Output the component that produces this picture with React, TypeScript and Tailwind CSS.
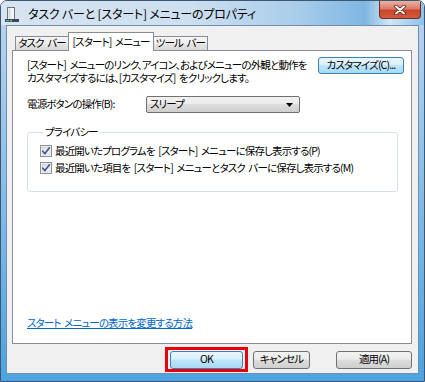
import React from "react";

function WinButton({
  label,
  focused,
  className,
}: {
  label: string;
  focused?: boolean;
  className: string;
}) {
  return (
    <div
      className={
        "flex items-center justify-center rounded-[3px] border leading-none text-black " +
        (focused
          ? "border-[#3c7fb1] bg-[linear-gradient(180deg,#eaf6fd_0%,#d9f0fc_45%,#bee6fd_50%,#a7d9f5_100%)] "
          : "border-[#707070] bg-[linear-gradient(180deg,#f2f2f2_0%,#ebebeb_45%,#dddddd_50%,#cfcfcf_100%)] ") +
        className
      }
    >
      {label}
    </div>
  );
}

function CheckBox() {
  return (
    <svg width="12" height="12" viewBox="0 0 12 12" className="shrink-0">
      <defs>
        <linearGradient id="cbg" x1="0" y1="0" x2="1" y2="1">
          <stop offset="0" stopColor="#dcdcdc" />
          <stop offset="1" stopColor="#fbfbfb" />
        </linearGradient>
      </defs>
      <rect x="0.5" y="0.5" width="11" height="11" fill="#fff" stroke="#8e8f8f" />
      <rect x="2" y="2" width="8" height="8" fill="url(#cbg)" stroke="#c4c4c4" strokeWidth="0.6" />
      <path d="M2.8 6.2 L5 8.6 L9.4 2.8" fill="none" stroke="#3d5a98" strokeWidth="1.7" strokeLinecap="round" strokeLinejoin="round" />
    </svg>
  );
}

function TitleIcon() {
  return (
    <svg width="14" height="17" viewBox="0 0 14 17" className="shrink-0">
      <rect x="2.5" y="1.5" width="7" height="12" fill="#f4f4f4" stroke="#6c7480" />
      <rect x="3.5" y="2.5" width="2" height="10" fill="#d5d9de" />
      <rect x="0" y="13" width="14" height="3" fill="#3b4656" />
      <rect x="1" y="14" width="3" height="1.5" fill="#4aa3e0" />
      <rect x="5" y="14" width="2" height="1.5" fill="#7bc043" />
    </svg>
  );
}

export default function App() {
  return (
    <div className="h-[382px] w-[425px] overflow-hidden bg-white font-['Noto_Sans_CJK_JP',sans-serif] text-[10.5px] tracking-[-0.85px] text-black [font-feature-settings:'palt'] [word-spacing:2px]">
      <div className="flex h-full w-full flex-col overflow-hidden rounded-t-[7px] border border-[#3d5672]">
        {/* Title bar */}
        <div className="flex h-[24px] shrink-0 items-start bg-[linear-gradient(90deg,#d7e4f1_0%,#cddff0_45%,#a9cdea_70%,#7fb6e1_86%,#d3e6f5_92%,#8cc2e9_100%)] pl-[4px]">
          <div className="mt-[5px]">
            <TitleIcon />
          </div>
          <span className="ml-[9px] mt-[5px] text-[12px] leading-[16px] tracking-[-0.2px] text-black [word-spacing:0px]">
            タスク バーと [スタート] メニューのプロパティ
          </span>
          <div className="mr-[3px] ml-auto flex h-[18px] w-[42px] items-center justify-center rounded-b-[4px] border border-t-0 border-[#6a2f25] bg-[linear-gradient(180deg,#eab3a3_0%,#db7c66_45%,#c9452c_55%,#d35a3c_100%)]">
            <svg width="12" height="10" viewBox="0 0 12 10">
              <path d="M2 1.5 L10 8.5 M10 1.5 L2 8.5" stroke="#4a1e18" strokeWidth="3.6" strokeLinecap="round" />
              <path d="M2 1.5 L10 8.5 M10 1.5 L2 8.5" stroke="#ffffff" strokeWidth="2" strokeLinecap="round" />
            </svg>
          </div>
        </div>

        {/* Frame body */}
        <div className="flex flex-1 flex-col bg-[linear-gradient(180deg,#b6d2ec_0%,#8ec0e8_40%,#4ba3df_100%)] px-[5px] pb-[7px]">
          <div className="flex flex-1 flex-col border border-[#6f8fb0] bg-[#f0f0f0]">
            {/* Tabs */}
            <div className="flex items-end pl-[8px] pt-[6px]">
              <div className="flex h-[14px] w-[53px] items-center justify-center border border-r-0 border-b-0 border-[#898c95] bg-[linear-gradient(180deg,#f5f5f5_0%,#eeeeee_50%,#e4e4e4_51%,#dadada_100%)] leading-none">
                タスク バー
              </div>
              <div className="relative z-10 -mb-px flex h-[19px] w-[86px] items-start justify-center border border-b-0 border-[#898c95] bg-white pt-[4px] leading-none">
                [スタート] メニュー
              </div>
              <div className="flex h-[14px] w-[54px] items-center justify-center border border-l-0 border-b-0 border-[#898c95] bg-[linear-gradient(180deg,#f5f5f5_0%,#eeeeee_50%,#e4e4e4_51%,#dadada_100%)] leading-none">
                ツール バー
              </div>
            </div>

            {/* Panel */}
            <div className="ml-[5px] mr-[6px] flex flex-1 flex-col border border-[#898c95] bg-white pb-[13px]">
              <div className="flex items-start justify-between pl-[14px] pr-[7px] pt-[6px]">
                <p className="mt-[1px] leading-[13px]">
                  [スタート] メニューのリンク、アイコン、およびメニューの外観と動作を
                  <br />
                  カスタマイズするには、[カスタマイズ] をクリックします。
                </p>
                <WinButton label="カスタマイズ(C)..." focused className="h-[17px] w-[86px] shrink-0" />
              </div>

              <div className="mt-[12px] flex items-center pl-[14px]">
                <span className="w-[119px] leading-none">電源ボタンの操作(B):</span>
                <div className="flex h-[17px] w-[154px] items-center justify-between rounded-[2px] border border-[#707070] bg-[linear-gradient(180deg,#f2f2f2_0%,#ebebeb_45%,#dddddd_50%,#cfcfcf_100%)] pl-[3px] pr-[6px]">
                  <span className="leading-none">スリープ</span>
                  <svg width="7" height="4" viewBox="0 0 7 4">
                    <path d="M0 0 H7 L3.5 4 Z" fill="#000" />
                  </svg>
                </div>
              </div>

              <fieldset className="ml-[14px] mt-[13px] w-[371px] rounded-[3px] border border-[#d5dfe5] pb-[16px] pl-[12px]">
                <legend className="ml-[3px] px-[2px] leading-[12px]">プライバシー</legend>
                <div className="mt-[6px] flex items-center gap-[3px]">
                  <CheckBox />
                  <span className="leading-[14px]">
                    最近開いたプログラムを [スタート] メニューに保存し表示する(P)
                  </span>
                </div>
                <div className="mt-[3px] flex items-center gap-[3px]">
                  <CheckBox />
                  <span className="leading-[14px]">
                    最近開いた項目を [スタート] メニューとタスク バーに保存し表示する(M)
                  </span>
                </div>
              </fieldset>

              <a className="mt-auto ml-[14px] self-start leading-[14px] text-[#0066cc] underline">
                スタート メニューの表示を変更する方法
              </a>
            </div>

            {/* Buttons */}
            <div className="mt-[3px] mb-px flex items-center pl-[158px]">
              <div className="flex h-[25px] w-[83px] items-center justify-center border-[3px] border-[#e8000b]">
                <WinButton label="OK" focused className="h-[18px] w-[73px]" />
              </div>
              <WinButton label="キャンセル" className="ml-[5px] h-[18px] w-[57px]" />
              <WinButton label="適用(A)" className="ml-[26px] h-[18px] w-[76px]" />
            </div>
          </div>
        </div>
      </div>
    </div>
  );
}
